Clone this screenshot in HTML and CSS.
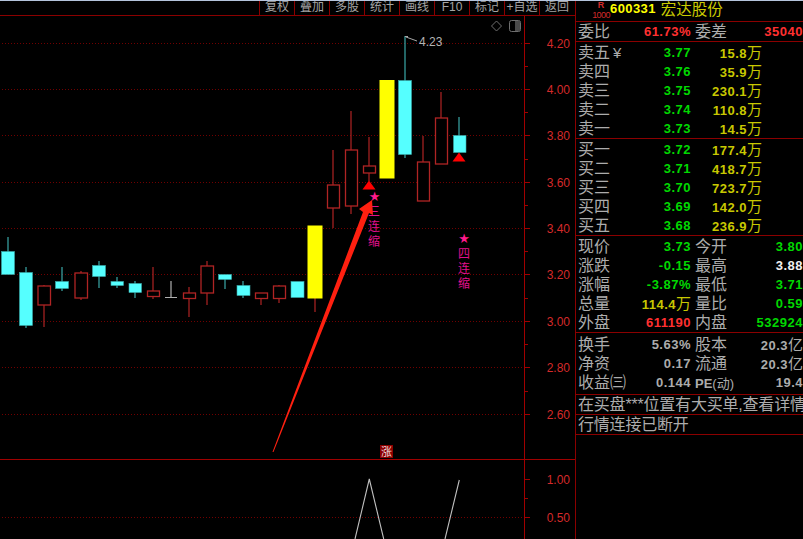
FILE: index.html
```html
<!DOCTYPE html>
<html lang="zh-CN">
<head>
  <meta charset="UTF-8" />
  <title>600331 宏达股份</title>
  <link rel="stylesheet" href="styles.css">
</head>
<body>
  <div class="app">
    <div class="chart">
      <div class="toolbar">
        <span class="tool">复权</span>
        <span class="tool">叠加</span>
        <span class="tool">多股</span>
        <span class="tool">统计</span>
        <span class="tool">画线</span>
        <span class="tool">F10</span>
        <span class="tool">标记</span>
        <span class="tool">+自选</span>
        <span class="tool">返回</span>
      </div>
      <svg class="plot" width="575" height="523" viewBox="0 16 575 523">
        <!-- grid -->
        <g class="grid">
          <path d="M2 43.5H522M2 89.5H522M2 135.5H522M2 182.5H522M2 228.5H522M2 274.5H522M2 321.5H522M2 367.5H522M2 414.5H522M2 517.5H522" />
        </g>
        <path class="rule" d="M0 459.5H575M524.5 16V539" />
        <path class="rule" d="M525 43.5h5M525 89.5h5M525 135.5h5M525 182.5h5M525 228.5h5M525 274.5h5M525 321.5h5M525 367.5h5M525 414.5h5M525 479.5h5M525 517.5h5" />
        <path class="rule" d="M525 66.5h3M525 112.5h3M525 159.5h3M525 205.5h3M525 251.5h3M525 298.5h3M525 344.5h3M525 391.5h3M525 498.5h3" />
        <g class="axis">
          <text x="570" y="48">4.20</text>
          <text x="570" y="94">4.00</text>
          <text x="570" y="140">3.80</text>
          <text x="570" y="187">3.60</text>
          <text x="570" y="233">3.40</text>
          <text x="570" y="279">3.20</text>
          <text x="570" y="326">3.00</text>
          <text x="570" y="372">2.80</text>
          <text x="570" y="419">2.60</text>
          <text x="570" y="484">1.00</text>
          <text x="570" y="522">0.50</text>
        </g>

        <!-- falling candles -->
        <g class="down">
          <path d="M8 237V252M26 267V273M26 325V328M62 267V282M62 288V291M99 261V266M99 276V288M117 277V282M117 285V288M135 281V284M135 292V298M225 279V289M243 281V286M243 295V298M405 36V81M405 154V158M459 117V136" />
          <rect x="1.5" y="251.5" width="13" height="23" />
          <rect x="19.5" y="272.5" width="13" height="53" />
          <rect x="55.5" y="281.5" width="13" height="7" />
          <rect x="92.5" y="265.5" width="13" height="11" />
          <rect x="111" y="281.5" width="12.5" height="4" />
          <rect x="129" y="283.5" width="12.5" height="9" />
          <rect x="218.5" y="274.5" width="13" height="5" />
          <rect x="237" y="285.5" width="13" height="10" />
          <rect x="291" y="281.5" width="13" height="16" />
          <rect x="398.5" y="80.5" width="13" height="74" />
          <rect x="453.5" y="135.5" width="12.5" height="17" />
        </g>

        <!-- rising candles -->
        <g class="up">
          <path d="M44 285V286M44 305V327M81 271V273M81 298V300M153 267V291M153 296V299M189 287V293M189 298V317M207 261V266M207 293V305M261 298V305M279 285V286M279 298V303M315 298V312M333 150V185M333 208V228M351 111V150M351 206V214M369 137V166M369 173V181M423 136V162M441 92V118" />
          <rect x="38" y="286" width="12.5" height="19" />
          <rect x="75" y="273" width="12.5" height="25" />
          <rect x="147.5" y="291" width="12" height="5.5" />
          <rect x="183.5" y="293" width="12" height="5.5" />
          <rect x="201" y="266" width="12.5" height="27" />
          <rect x="255.5" y="293" width="12" height="5.5" />
          <rect x="273.5" y="286" width="12" height="12.5" />
          <rect x="327.5" y="185" width="12" height="23" />
          <rect x="345.5" y="150" width="12" height="56" />
          <rect x="363.5" y="166" width="12" height="7" />
          <rect x="417.5" y="162" width="12" height="39" />
          <rect x="435.5" y="118" width="12" height="46" />
        </g>

        <!-- doji -->
        <path class="doji" d="M165 297.5H177M171 281V297" />

        <!-- limit-up candles -->
        <rect class="limit" x="307.5" y="225.5" width="15" height="73" />
        <rect class="limit" x="379.5" y="80" width="15" height="98.5" />

        <!-- high price flag -->
        <path class="flag" d="M405 36.5h3M406 37L417 41" />
        <text class="high" x="419" y="46">4.23</text>

        <!-- signals -->
        <path class="mark" d="M369 180.5L375.5 189.5H362.5Z" />
        <path class="mark" d="M459 152.5L465.5 161.5H452.5Z" />
        <text class="star" x="374.5" y="200.5">★</text>
        <text class="star" x="464" y="242.5">★</text>
        <text class="sig" x="374"><tspan x="374" y="216">三</tspan><tspan x="374" y="231">连</tspan><tspan x="374" y="246">缩</tspan></text>
        <text class="sig" x="464"><tspan x="464" y="258">四</tspan><tspan x="464" y="273">连</tspan><tspan x="464" y="288">缩</tspan></text>

        <!-- hand drawn arrow -->
        <polygon class="arrow" points="272.5,452 363,212 359,209 372,200 373,215 369,213 273.5,452" />

        <!-- corner icons -->
        <path class="icon" d="M496.5 21L501.5 26L496.5 31L491.5 26Z" />
        <rect class="icon" x="509.5" y="20.5" width="11" height="11" rx="2" />
        <rect class="icon-fill" x="515" y="21" width="5" height="10" />

        <!-- lower pane -->
        <rect class="badge" x="380" y="445" width="13" height="13" />
        <text class="badge-text" x="386.5" y="455.5">涨</text>
        <path class="line" d="M355 539L369.3 479L383.7 539M445 539L459.3 480" />
      </svg>
    </div>

    <div class="panel">
      <div class="stock">
        <div class="rank"><b>R</b><span>1000</span></div>
        <span class="code">600331</span>
        <span class="name">宏达股份</span>
      </div>

      <div class="section tight">
        <div class="row">
          <span>委比</span><b class="red">61.73%</b>
          <span>委差</span><b class="red">35040</b>
        </div>
      </div>

      <div class="section">
        <div class="row book"><span>卖五<i class="yen">¥</i></span><b class="green">3.77</b><b class="vol">15.8<em>万</em></b></div>
        <div class="row book"><span>卖四</span><b class="green">3.76</b><b class="vol">35.9<em>万</em></b></div>
        <div class="row book"><span>卖三</span><b class="green">3.75</b><b class="vol">230.1<em>万</em></b></div>
        <div class="row book"><span>卖二</span><b class="green">3.74</b><b class="vol">110.8<em>万</em></b></div>
        <div class="row book"><span>卖一</span><b class="green">3.73</b><b class="vol">14.5<em>万</em></b></div>
      </div>

      <div class="section">
        <div class="row book"><span>买一</span><b class="green">3.72</b><b class="vol">177.4<em>万</em></b></div>
        <div class="row book"><span>买二</span><b class="green">3.71</b><b class="vol">418.7<em>万</em></b></div>
        <div class="row book"><span>买三</span><b class="green">3.70</b><b class="vol">723.7<em>万</em></b></div>
        <div class="row book"><span>买四</span><b class="green">3.69</b><b class="vol">142.0<em>万</em></b></div>
        <div class="row book"><span>买五</span><b class="green">3.68</b><b class="vol">236.9<em>万</em></b></div>
      </div>

      <div class="section">
        <div class="row"><span>现价</span><b class="green">3.73</b><span>今开</span><b class="green">3.80</b></div>
        <div class="row"><span>涨跌</span><b class="green">-0.15</b><span>最高</span><b class="white">3.88</b></div>
        <div class="row"><span>涨幅</span><b class="green">-3.87%</b><span>最低</span><b class="green">3.71</b></div>
        <div class="row"><span>总量</span><b class="vol">114.4<em>万</em></b><span>量比</span><b class="green">0.59</b></div>
        <div class="row"><span>外盘</span><b class="red">611190</b><span>内盘</span><b class="green">532924</b></div>
      </div>

      <div class="section fund">
        <div class="row"><span>换手</span><b>5.63%</b><span>股本</span><b>20.3<em>亿</em></b></div>
        <div class="row"><span>净资</span><b>0.17</b><span>流通</span><b>20.3<em>亿</em></b></div>
        <div class="row"><span>收益㈢</span><b>0.144</b><span><b class="pe">PE</b><em>(动)</em></span><b>19.4</b></div>
      </div>

      <div class="section tight"><div class="note">在买盘***位置有大买单,查看详情</div></div>
      <div class="section tight"><div class="note">行情连接已断开</div></div>
    </div>
  </div>
</body>
</html>
```

FILE: styles.css
```css
html, body {
  margin: 0;
  padding: 0;
  background: #000;
}

body {
  font-family: "Liberation Sans", "Noto Sans CJK SC", sans-serif;
  color: #acacac;
  overflow: hidden;
}

.app {
  display: flex;
  width: 803px;
  height: 539px;
  box-sizing: border-box;
  border-top: 1px solid #b4c4dc;
  overflow: hidden;
}

/* chart side */
.chart {
  width: 575px;
  flex: none;
}

.toolbar {
  display: flex;
  justify-content: flex-end;
  height: 14px;
  padding-right: 1px;
  border-bottom: 1px solid #8b0000;
}

.tool {
  width: 34px;
  height: 14px;
  border-left: 1px solid #8b0000;
  color: #a4a4a4;
  font-size: 12px;
  line-height: 12px;
  text-align: center;
  white-space: nowrap;
}

.plot {
  display: block;
}

.grid path {
  fill: none;
  stroke: #700000;
  stroke-dasharray: 1 2;
}

.rule {
  fill: none;
  stroke: #a00000;
}

.axis text {
  fill: #d42a2a;
  font-size: 12px;
  text-anchor: end;
}

.down rect {
  fill: #55ffff;
  stroke: #3aa8a8;
  stroke-width: 0.6;
}

.down path {
  fill: none;
  stroke: #3aa8a8;
  stroke-width: 1.2;
}

.up rect {
  fill: #000;
  stroke: #b02424;
  stroke-width: 1.3;
}

.up path {
  fill: none;
  stroke: #b02424;
  stroke-width: 1.2;
}

.doji {
  fill: none;
  stroke: #b0b0b0;
  stroke-width: 1.2;
}

.limit {
  fill: #ffff00;
}

.flag {
  fill: none;
  stroke: #a8a8a8;
}

.high {
  fill: #b4b4b4;
  font-size: 12px;
}

.mark {
  fill: #ff0000;
}

.star {
  fill: #ff1a8c;
  font-family: "DejaVu Sans", sans-serif;
  font-size: 13px;
  text-anchor: middle;
}

.sig {
  fill: #e0108c;
  font-size: 12px;
  text-anchor: middle;
}

.arrow {
  fill: #ff2010;
}

.icon {
  fill: none;
  stroke: #6e6e6e;
}

.icon-fill {
  fill: #4a4a4a;
}

.badge {
  fill: #8b0000;
}

.badge-text {
  fill: #f0dcdc;
  font-size: 11px;
  text-anchor: middle;
}

.line {
  fill: none;
  stroke: #c0c0c0;
  stroke-width: 1.1;
}

/* quote panel */
.panel {
  width: 228px;
  flex: none;
  box-sizing: border-box;
  border-left: 1px solid #8b0000;
  overflow: hidden;
}

.stock {
  display: flex;
  align-items: flex-start;
  height: 20px;
  padding-left: 16px;
  border-bottom: 1px solid #8b0000;
}

.rank {
  display: flex;
  flex-direction: column;
  align-items: center;
  width: 18px;
  color: #d42a2a;
  font-size: 9px;
  line-height: 10px;
  letter-spacing: -0.6px;
}

.rank b {
  font-size: 9px;
  line-height: 9px;
  letter-spacing: 0;
}

.code {
  color: #ffff00;
  font-size: 13px;
  font-weight: bold;
  line-height: 15px;
  letter-spacing: 0.4px;
}

.name {
  margin-left: 5px;
  color: #cccc00;
  font-size: 15.5px;
  line-height: 18px;
}

.section {
  padding: 1px 0 0 2px;
  border-bottom: 1px solid #8b0000;
}

.section.tight {
  padding-top: 0;
}

.section.fund {
  padding: 2px 0 2px 2px;
}

.row {
  display: grid;
  grid-template-columns: 48px 65px 48px 64px;
  column-gap: 0;
  width: 229px;
  height: 19px;
  line-height: 19px;
  font-size: 16px;
  white-space: nowrap;
}

.row.book {
  grid-template-columns: 48px 65px 71px;
}

.row > span:nth-child(3) {
  margin-left: 4px;
}

.row > b {
  font-size: 13px;
  letter-spacing: 0.5px;
  text-align: right;
}

.row em {
  font-size: 15px;
  font-style: normal;
  font-weight: normal;
  letter-spacing: 0;
}

.row span em {
  font-size: 13px;
}

.yen {
  margin-left: 3px;
  font-size: 15px;
  font-style: normal;
}

.pe {
  font-size: 13px;
}

.red { color: #ff3030; }
.green { color: #00d800; }
.white { color: #f0f0f0; }
.row > b.vol { color: #c8c800; }

.note {
  height: 19px;
  line-height: 19px;
  font-size: 16px;
  letter-spacing: -0.2px;
  white-space: nowrap;
}
```
